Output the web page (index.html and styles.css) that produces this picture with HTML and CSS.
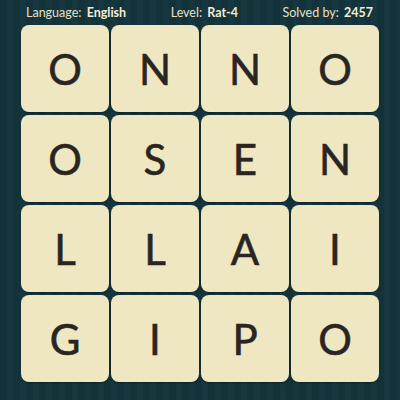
FILE: index.html
```html
<!DOCTYPE html>
<html>
<head>
<meta charset="utf-8">
<link rel="stylesheet" href="styles.css">
</head>
<body>
<div class="page">
  <div class="header">
    <span class="item">Language: <b>English</b></span>
    <span class="item">Level: <b>Rat-4</b></span>
    <span class="item">Solved by: <b>2457</b></span>
  </div>
  <div class="grid">
    <div class="tile">O</div><div class="tile">N</div><div class="tile">N</div><div class="tile">O</div>
    <div class="tile">O</div><div class="tile">S</div><div class="tile">E</div><div class="tile">N</div>
    <div class="tile">L</div><div class="tile">L</div><div class="tile">A</div><div class="tile">I</div>
    <div class="tile">G</div><div class="tile">I</div><div class="tile">P</div><div class="tile">O</div>
  </div>
</div>
</body>
</html>
```
FILE: styles.css
```css
html, body {
  margin: 0;
  padding: 0;
}
body {
  width: 400px;
  height: 400px;
  overflow: hidden;
  background-color: #13323a;
  background-image: repeating-linear-gradient(90deg, #13323a 0px, #13323a 7px, #163740 7px, #163740 13px);
  font-family: Lato, "Open Sans", sans-serif;
}
.page {
  padding: 0 0 0 21px;
}
.header {
  height: 25px;
  display: flex;
  align-items: center;
  justify-content: space-between;
  width: 352px;
  padding-left: 5px;
  padding-bottom: 1px;
  color: #e6e0c4;
  font-size: 12.5px;
  box-sizing: border-box;
}
.header b {
  font-weight: 700;
  color: #f2edd6;
  margin-left: 2px;
}
.grid {
  display: grid;
  grid-template-columns: repeat(4, 88px);
  grid-auto-rows: 87px;
  column-gap: 2px;
  row-gap: 3px;
}
.tile {
  background: #efe7c1;
  border-radius: 8px;
  display: flex;
  align-items: center;
  justify-content: center;
  color: #2a2521;
  font-size: 42px;
  font-weight: 400;
  -webkit-text-stroke: 0.6px #2a2521;
  box-shadow: 0 1px 2px rgba(0,0,0,0.35);
}
```
